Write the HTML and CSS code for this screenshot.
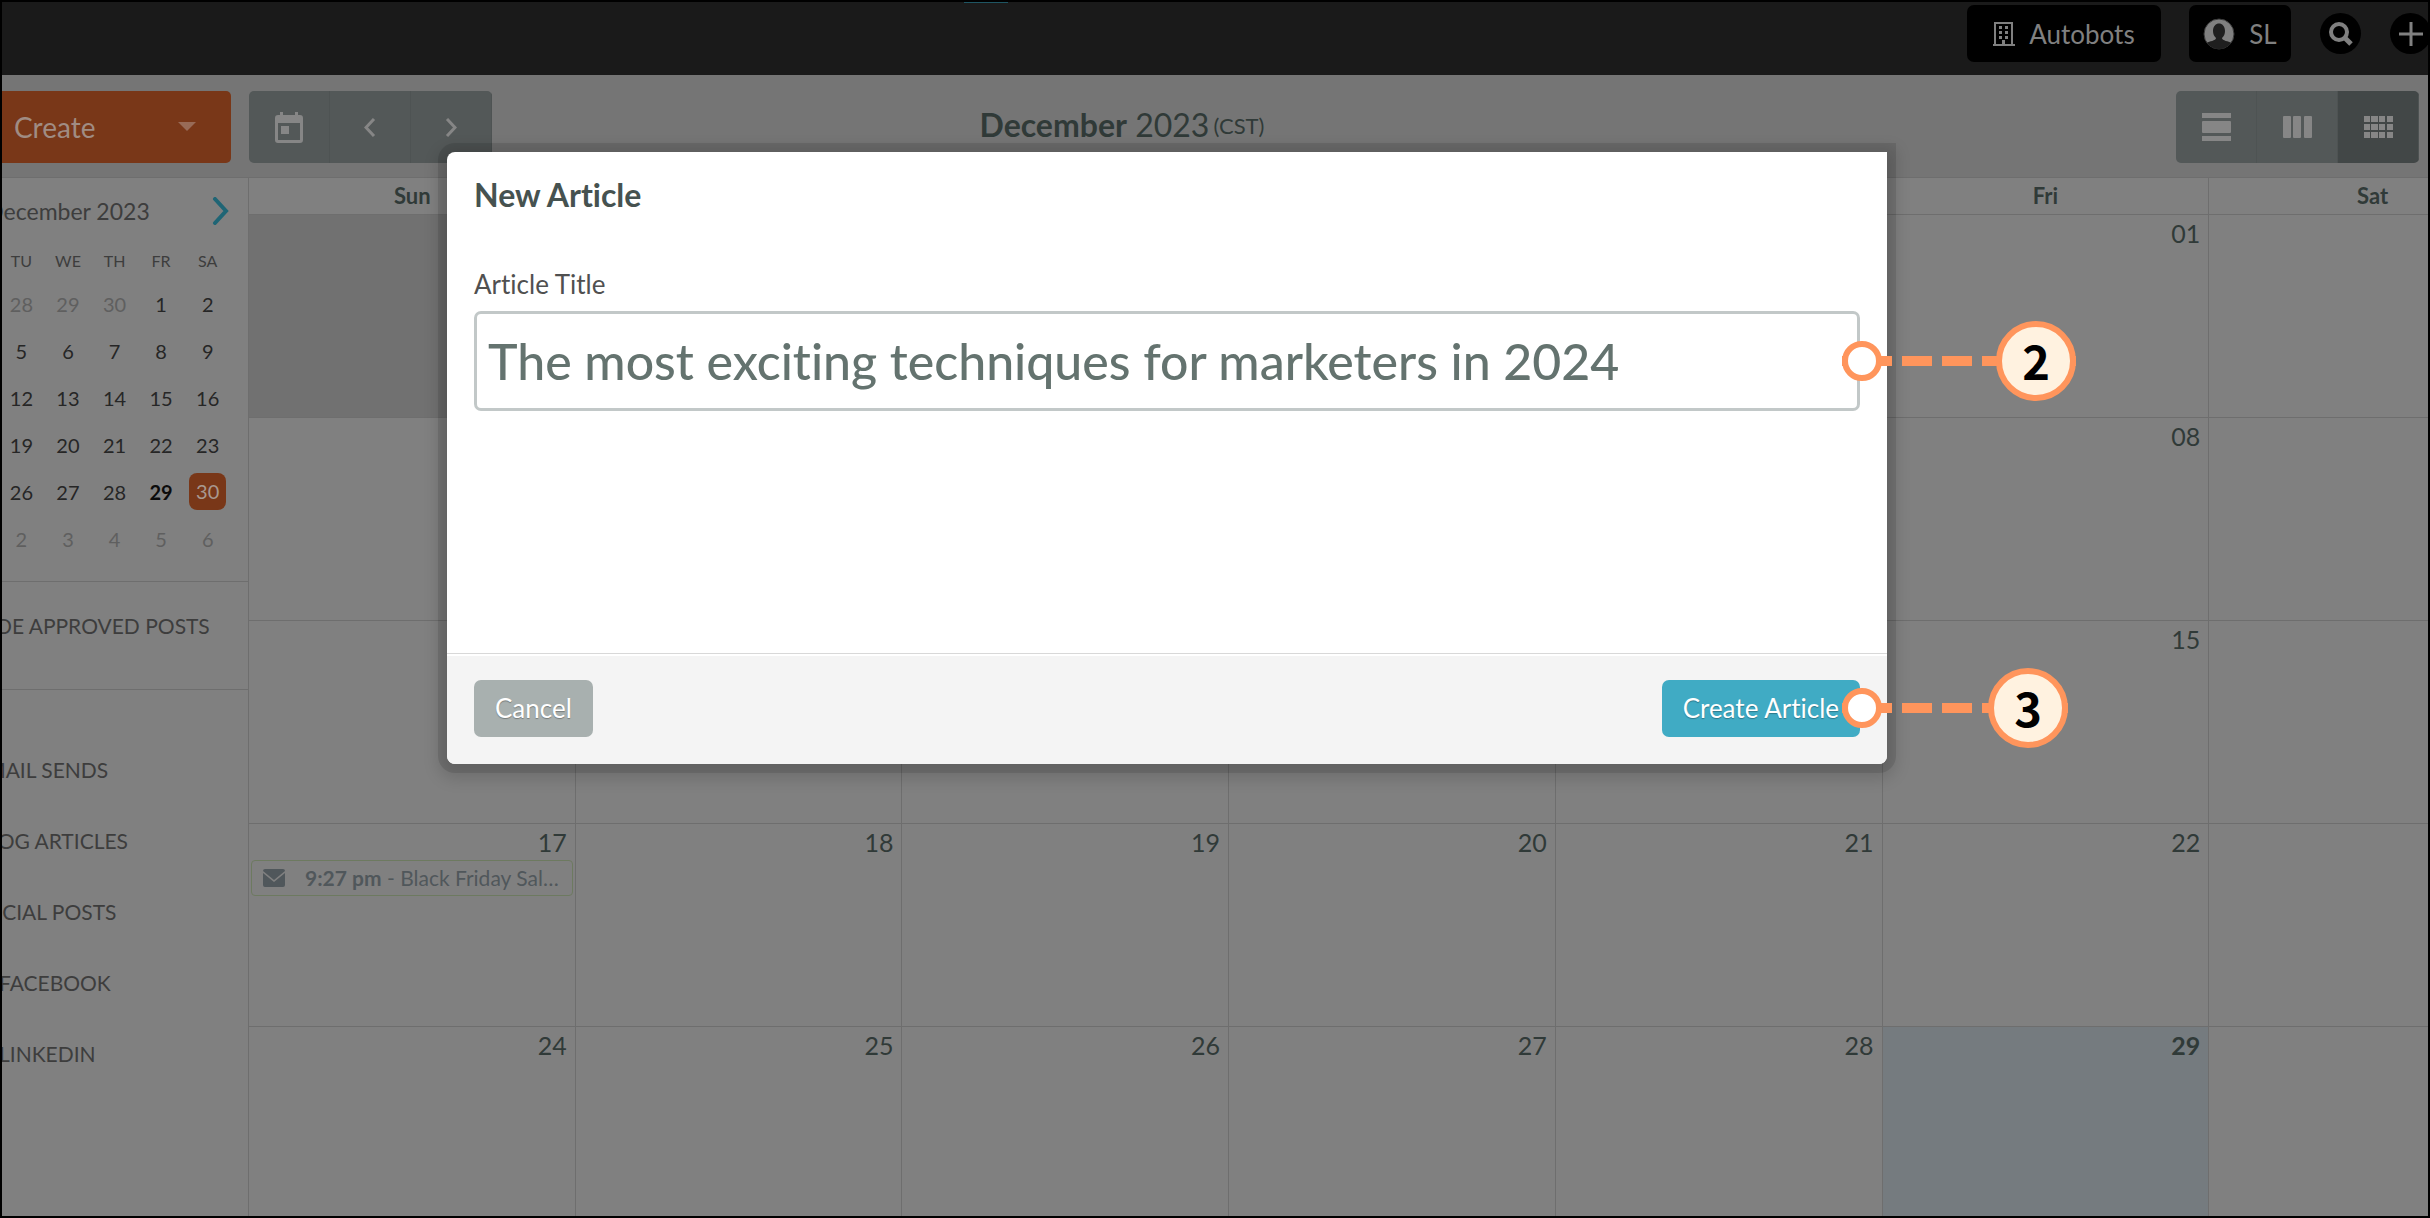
FILE: index.html
```
<!DOCTYPE html>
<html lang="en">
<head>
    <meta charset="UTF-8">
    <meta name="viewport" content="width=device-width, initial-scale=1.0">
    <title>Calendar - New Article</title>
    <link rel="stylesheet" href="styles.css">
</head>
<body>
<div class="app">
    <!-- Top bar -->
    <header class="topbar">
        <span class="nav-marker"></span>
        <button class="account">
            <svg width="22" height="24" viewBox="0 0 22 24"><path d="M2 23V1h17v22M0 23h22" fill="none" stroke="currentColor" stroke-width="2"/><path d="M6 4h3v3H6z M12 4h3v3h-3z M6 9h3v3H6z M12 9h3v3h-3z M6 14h3v3H6z M12 14h3v3h-3z M9 18h3v5H9z" fill="currentColor"/></svg>
            Autobots
        </button>
        <button class="user">
            <svg width="32" height="32" viewBox="0 0 32 32"><circle cx="16" cy="16" r="15" fill="#808080" stroke="#3a3a3a"/><path d="M10 13c0-10 12-10 12 0 0 3-1 5-3 7 0 3 7 3 9 5-6 8-18 8-24 0 2-2 9-2 9-5-2-2-3-4-3-7z" fill="#1f1f1f"/></svg>
            SL
        </button>
        <button class="round" aria-label="Search">
            <svg width="24" height="24" viewBox="0 0 24 24"><circle cx="10" cy="10" r="8" fill="none" stroke="currentColor" stroke-width="4"/><path d="M15 15l7 7" stroke="currentColor" stroke-width="5"/></svg>
        </button>
        <button class="round add" aria-label="Add">
            <svg width="24" height="24" viewBox="0 0 24 24"><path d="M12 0v24M0 12h24" stroke="currentColor" stroke-width="3"/></svg>
        </button>
    </header>

    <!-- Toolbar -->
    <div class="toolbar">
        <button class="create">
            Create
            <svg width="18" height="10" viewBox="0 0 18 10"><path d="M0 0h18l-9 9z" fill="#986b57"/></svg>
        </button>
        <div class="btn-group">
            <button aria-label="Today">
                <svg width="28" height="31" viewBox="0 0 28 31"><path fill-rule="evenodd" d="M5 0h3v3h12V0h3v3h2q3 0 3 3v22q0 3-3 3H3q-3 0-3-3V6q0-3 3-3h2z M3 11v17h22V11z M6 14h8v8H6z" fill="currentColor"/></svg>
            </button>
            <button aria-label="Previous">
                <svg width="12" height="19" viewBox="0 0 12 19"><path d="M10 1L2 9.500l8 8.500" fill="none" stroke="currentColor" stroke-width="3"/></svg>
            </button>
            <button aria-label="Next">
                <svg width="12" height="19" viewBox="0 0 12 19"><path d="M2 1l8 8.500L2 18" fill="none" stroke="currentColor" stroke-width="3"/></svg>
            </button>
        </div>
        <h1 class="period"><b>December</b> 2023 <small>(CST)</small></h1>
        <div class="btn-group">
            <button aria-label="Day view">
                <svg width="29" height="28" viewBox="0 0 29 28"><path d="M0 0h29v5H0z M0 23h29v5H0z" fill="currentColor"/><rect y="8" width="29" height="12" rx="1" fill="currentColor"/></svg>
            </button>
            <button aria-label="Week view">
                <svg width="29" height="22" viewBox="0 0 29 22"><g fill="currentColor"><rect width="8" height="22" rx="1"/><rect x="10" width="8" height="22" rx="1"/><rect x="21" width="8" height="22" rx="1"/></g></svg>
            </button>
            <button class="active" aria-label="Month view">
                <svg width="29" height="22" viewBox="0 0 29 22"><path d="M0 0h6v6H0z M7 0h7v6H7z M15 0h6v6h-6z M23 0h6v6h-6z M0 8h6v6H0z M7 8h7v6H7z M15 8h6v6h-6z M23 8h6v6h-6z M0 16h6v6H0z M7 16h7v6H7z M15 16h6v6h-6z M23 16h6v6h-6z" fill="currentColor"/></svg>
            </button>
        </div>
    </div>

    <div class="content">
        <!-- Sidebar -->
        <aside class="sidebar">
            <div class="mini">
                <div class="mini-head">
                    <h2>December 2023</h2>
                    <button aria-label="Next month">
                        <svg width="17" height="28" viewBox="0 0 17 28"><path d="M3 2l11 12L3 26" fill="none" stroke="#1f6575" stroke-width="4" stroke-linecap="round"/></svg>
                    </button>
                </div>
                <table class="mini-days">
                    <thead>
                        <tr><th>SU</th><th>MO</th><th>TU</th><th>WE</th><th>TH</th><th>FR</th><th>SA</th></tr>
                    </thead>
                    <tbody>
                        <tr><td class="off">26</td><td class="off">27</td><td class="off">28</td><td class="off">29</td><td class="off">30</td><td>1</td><td>2</td></tr>
                        <tr><td>3</td><td>4</td><td>5</td><td>6</td><td>7</td><td>8</td><td>9</td></tr>
                        <tr><td>10</td><td>11</td><td>12</td><td>13</td><td>14</td><td>15</td><td>16</td></tr>
                        <tr><td>17</td><td>18</td><td>19</td><td>20</td><td>21</td><td>22</td><td>23</td></tr>
                        <tr><td>24</td><td>25</td><td>26</td><td>27</td><td>28</td><td class="today">29</td><td><span class="selected">30</span></td></tr>
                        <tr><td class="off">31</td><td class="off">1</td><td class="off">2</td><td class="off">3</td><td class="off">4</td><td class="off">5</td><td class="off">6</td></tr>
                    </tbody>
                </table>
            </div>
            <div class="approved">HIDE APPROVED POSTS</div>
            <ul class="filters">
                <li>EMAIL SENDS</li>
                <li>BLOG ARTICLES</li>
                <li>SOCIAL POSTS</li>
                <li class="sub">FACEBOOK</li>
                <li class="sub">LINKEDIN</li>
            </ul>
        </aside>

        <!-- Month -->
        <div class="month-wrap">
            <table class="month">
                <thead>
                    <tr><th>Sun</th><th>Mon</th><th>Tue</th><th>Wed</th><th>Thu</th><th>Fri</th><th>Sat</th></tr>
                </thead>
                <tbody>
                    <tr><td class="past"></td><td class="past"></td><td class="past"></td><td class="past"></td><td class="past"></td><td>01</td><td>02</td></tr>
                    <tr><td>03</td><td>04</td><td>05</td><td>06</td><td>07</td><td>08</td><td>09</td></tr>
                    <tr><td>10</td><td>11</td><td>12</td><td>13</td><td>14</td><td>15</td><td>16</td></tr>
                    <tr>
                        <td>17
                            <a class="event" href="#">
                                <svg width="22" height="18" viewBox="0 0 22 18"><path d="M2 0h18q2 0 2 2L11 11 0 2q0-2 2-2z M0 4l11 9 11-9v12q0 2-2 2H2q-2 0-2-2z" fill="currentColor"/></svg>
                                <span><b>9:27 pm</b> - Black Friday Sales Event</span>
                            </a>
                        </td>
                        <td>18</td><td>19</td><td>20</td><td>21</td><td>22</td><td>23</td>
                    </tr>
                    <tr><td>24</td><td>25</td><td>26</td><td>27</td><td>28</td><td class="current">29</td><td>30</td></tr>
                </tbody>
            </table>
        </div>
    </div>

    <!-- New article dialog -->
    <div class="modal-layer">
        <form class="modal" role="dialog" aria-labelledby="modal-title">
            <div class="modal-body">
                <h2 id="modal-title">New Article</h2>
                <label for="article-title">Article Title</label>
                <div class="field">
                    <input id="article-title" type="text" value="The most exciting techniques for marketers in 2024">
                    <div class="callout"><i></i><b>2</b></div>
                </div>
            </div>
            <div class="modal-foot">
                <button type="button" class="cancel">Cancel</button>
                <div class="field">
                    <button type="button" class="submit">Create Article</button>
                    <div class="callout short"><i></i><b>3</b></div>
                </div>
            </div>
        </form>
    </div>
</div>
</body>
</html>
```

FILE: styles.css
```
* {
    box-sizing: border-box;
}

body {
    margin: 0;
    height: 100vh;
    font-family: Lato, "Liberation Sans", sans-serif;
    font-size: 22px;
    font-variant-ligatures: none;
    color: #303a38;
    background-color: #808080;
}

button {
    font-family: inherit;
    font-variant-ligatures: none;
    border: none;
    padding: 0;
    cursor: pointer;
}

svg {
    display: block;
    flex: none;
}

.app {
    position: relative;
    display: flex;
    flex-direction: column;
    height: 100%;
    border: 2px solid #000;
    overflow: hidden;
}

/* Top bar */
.topbar {
    flex: none;
    display: flex;
    justify-content: flex-end;
    align-items: flex-start;
    height: 73px;
    margin-right: -3px;
    background-color: #1a1a1a;
}

.nav-marker {
    width: 44px;
    height: 1px;
    margin: 0 auto 0 962px;
    background-color: #1f5562;
}

.topbar button {
    display: flex;
    align-items: center;
    justify-content: center;
    margin-top: 3px;
    color: #808080;
    background-color: #000;
    font-size: 26px;
}

.account {
    width: 194px;
    height: 57px;
    gap: 14px;
    border-radius: 7px;
    margin-right: 28px;
}

.user {
    width: 102px;
    height: 57px;
    gap: 14px;
    border-radius: 7px;
    margin-right: 29px;
}

.topbar .round {
    width: 41px;
    height: 41px;
    border-radius: 50%;
    margin-top: 11px;
}

.topbar .add {
    margin-left: 29px;
}

/* Toolbar */
.toolbar {
    flex: none;
    display: flex;
    align-items: center;
    height: 102px;
    padding: 2px 9px 0 0;
    background-color: #757575;
}

.create {
    display: flex;
    align-items: center;
    justify-content: space-between;
    width: 229px;
    height: 72px;
    padding: 0 35px 0 12px;
    margin-right: 18px;
    border-radius: 0 5px 5px 0;
    background-color: #793718;
    color: #a08c83;
    font-size: 28px;
}

.btn-group {
    display: flex;
    height: 72px;
    border-radius: 5px;
    overflow: hidden;
}

.btn-group button {
    display: flex;
    align-items: center;
    justify-content: center;
    width: 81px;
    color: #868686;
    background-color: #535858;
    border-right: 1px solid #4e5353;
}

.btn-group button.active {
    background-color: #424747;
}

.period {
    flex: 1;
    margin: 0;
    padding: 0 424px 6px 0;
    text-align: center;
    font-size: 32px;
    font-weight: normal;
}

.period small {
    font-size: 22px;
    margin-left: -4px;
    vertical-align: 3px;
}

.content {
    flex: 1;
    display: flex;
    min-height: 0;
    margin: 0 -108px 0 -114px;
    border-top: 1px solid #6e6e6e;
}

/* Sidebar */
.sidebar {
    flex: none;
    width: 361px;
    border-right: 1px solid #6e6e6e;
    color: #3d3d3d;
    font-size: 21px;
}

.mini {
    height: 404px;
    padding: 0 17px;
    border-bottom: 1px solid #6e6e6e;
}

.mini-head {
    display: grid;
    grid-template-columns: 1fr auto 1fr;
    align-items: center;
    height: 66px;
}

.mini-head h2 {
    grid-column: 2;
    margin: 0;
    font-size: 23px;
    font-weight: normal;
}

.mini-head button {
    justify-self: end;
    margin-right: 2px;
    background: none;
}

.mini-days {
    width: 100%;
    table-layout: fixed;
    border-collapse: collapse;
    text-align: center;
    font-size: 20px;
    color: #262626;
}

.mini-days td {
    height: 47px;
    padding: 0;
}

.mini-days th {
    height: 36px;
    padding: 0 0 4px;
    font-size: 16px;
    font-weight: normal;
    color: #3d3d3d;
}

.mini-days .off {
    color: #5f5f5f;
}

.mini-days .today {
    font-weight: bold;
    color: #0c0c0c;
}

.selected {
    display: block;
    width: 37px;
    margin: 0 auto;
    border-radius: 8px;
    line-height: 37px;
    background-color: #793718;
    color: #a8988f;
}

.approved {
    height: 108px;
    padding-left: 86px;
    line-height: 88px;
    border-bottom: 1px solid #6e6e6e;
}

.filters {
    margin: 0;
    padding: 44px 0 0 86px;
    list-style: none;
    line-height: 71px;
}

.sub {
    padding-left: 25px;
}

/* Month */
.month-wrap {
    flex: 1;
}

.month {
    width: 100%;
    table-layout: fixed;
    border-collapse: separate;
    border-spacing: 0;
}

.month th {
    height: 37px;
    padding: 0 0 2px;
    border-bottom: 1px solid #6e6e6e;
}

.month th:nth-child(6) {
    border-right: 1px solid #6e6e6e;
}

.month td {
    height: 203px;
    padding: 3px 8px;
    vertical-align: top;
    text-align: right;
    font-size: 25px;
    line-height: 30px;
    border-right: 1px solid #6e6e6e;
    border-bottom: 1px solid #6e6e6e;
}

.month .past {
    background-color: #717171;
}

.month .current {
    font-weight: bold;
    background-color: #757b7f;
}

.event {
    display: flex;
    align-items: center;
    gap: 20px;
    height: 36px;
    margin: 3px -6px 0;
    padding: 0 8px 0 11px;
    border: 1px solid #6d7a60;
    border-radius: 4px;
    color: #50575b;
    font-size: 21px;
    text-align: left;
    text-decoration: none;
}

.event span {
    overflow: hidden;
    white-space: nowrap;
    text-overflow: ellipsis;
}

/* Dialog */
.modal-layer {
    position: absolute;
    top: 150px;
    left: 0;
    right: 96px;
    display: flex;
    justify-content: center;
}

.modal {
    width: 1440px;
    border-radius: 8px 0 8px 8px;
    background-color: #fff;
    box-shadow: 0 0 0 9px rgba(0, 0, 0, 0.1), 0 6px 16px 9px rgba(0, 0, 0, 0.14);
}

.modal-body {
    height: 502px;
    padding: 23px 27px 0;
    border-bottom: 1px solid #d8d8d8;
}

.modal-body h2 {
    margin: 0 0 51px;
    font-size: 32px;
    line-height: 40px;
    color: #465250;
}

.modal-body label {
    display: block;
    margin-bottom: 8px;
    font-size: 26px;
    line-height: 37px;
    color: #505050;
}

.field {
    position: relative;
}

.modal-body input {
    display: block;
    width: 100%;
    height: 100px;
    padding: 0 11px;
    border: 3px solid #c2c8c8;
    border-radius: 7px;
    outline: none;
    background-color: #fff;
    font-family: inherit;
    font-size: 50px;
    font-weight: 500;
    font-variant-ligatures: none;
    color: #64736f;
}

.modal-foot {
    display: flex;
    align-items: center;
    justify-content: space-between;
    height: 110px;
    padding: 0 27px 4px;
    border-top: 2px solid #fff;
    border-radius: 0 0 8px 8px;
    background-color: #f4f4f4;
}

.modal-foot button {
    display: block;
    height: 57px;
    padding: 0 21px;
    border-radius: 7px;
    font-size: 26px;
    color: #fff;
    text-shadow: 0 1px 1px rgba(0, 0, 0, 0.3);
}

.cancel {
    background-color: #a8b0af;
}

.submit {
    background-color: #40abc4;
}

/* Numbered callouts */
.callout {
    position: absolute;
    z-index: 2;
    top: 50%;
    left: 100%;
    display: flex;
    align-items: center;
    width: 234px;
    height: 80px;
    margin: -40px 0 0 -18px;
    background: linear-gradient(90deg, #ff955c 75%, transparent 0) 20px center / 40px 10px repeat-x;
    pointer-events: none;
}

.callout.short {
    width: 226px;
}

.callout i {
    width: 40px;
    height: 40px;
    border: 6px solid #ff955c;
    border-radius: 50%;
    background-color: #fff;
}

.callout b {
    width: 80px;
    height: 80px;
    margin-left: auto;
    border: 6px solid #ff955c;
    border-radius: 50%;
    background-color: #fff2e0;
    color: #000;
    font-family: "Noto Sans CJK SC", sans-serif;
    font-size: 47px;
    line-height: 66px;
    text-align: center;
}
```
